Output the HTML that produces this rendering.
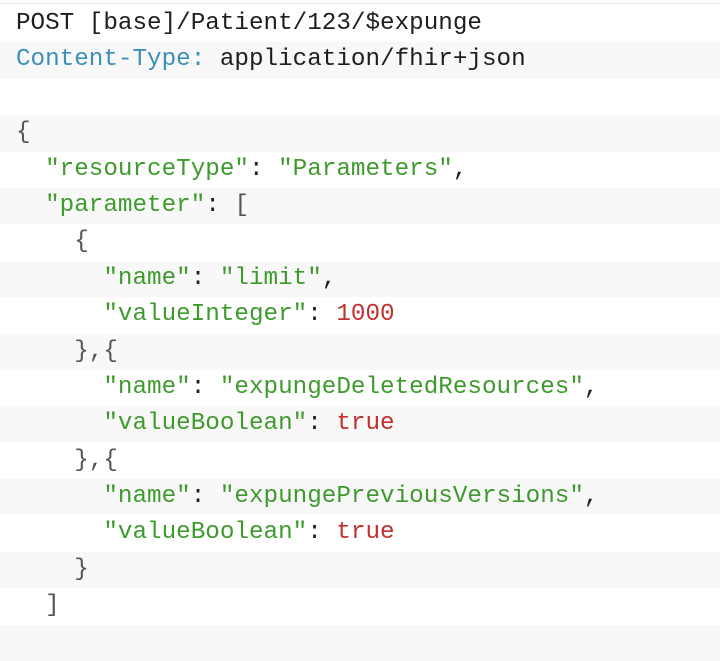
<!DOCTYPE html>
<html><head><meta charset="utf-8"><style>
html,body{margin:0;padding:0;background:#fff;width:720px;height:628px;overflow:hidden}
.wrap{position:absolute;left:0;top:3px;width:720px;border-top:1px solid #e4e4e4;padding-top:2px}
.l{height:36.4px;line-height:36.4px;padding-left:16px;white-space:pre;font-family:"Liberation Mono",monospace;font-size:24.27px;color:#1e1e1e}
.l:nth-child(even){background:#f8f8f8}
.b{color:#3d8fb8}.g{color:#3f9a2e}.r{color:#c0312c}.p{color:#555}
</style></head><body><div class="wrap">
<div class="l">POST [base]/Patient/123/$expunge</div>
<div class="l"><span class="b">Content-Type:</span> application/fhir+json</div>
<div class="l"> </div>
<div class="l"><span class="p">{</span></div>
<div class="l">  <span class="g">"resourceType"</span>: <span class="g">"Parameters"</span>,</div>
<div class="l">  <span class="g">"parameter"</span>: <span class="p">[</span></div>
<div class="l">    <span class="p">{</span></div>
<div class="l">      <span class="g">"name"</span>: <span class="g">"limit"</span>,</div>
<div class="l">      <span class="g">"valueInteger"</span>: <span class="r">1000</span></div>
<div class="l">    <span class="p">},{</span></div>
<div class="l">      <span class="g">"name"</span>: <span class="g">"expungeDeletedResources"</span>,</div>
<div class="l">      <span class="g">"valueBoolean"</span>: <span class="r">true</span></div>
<div class="l">    <span class="p">},{</span></div>
<div class="l">      <span class="g">"name"</span>: <span class="g">"expungePreviousVersions"</span>,</div>
<div class="l">      <span class="g">"valueBoolean"</span>: <span class="r">true</span></div>
<div class="l">    <span class="p">}</span></div>
<div class="l">  <span class="p">]</span></div>
<div class="l"> </div>
</div></body></html>
